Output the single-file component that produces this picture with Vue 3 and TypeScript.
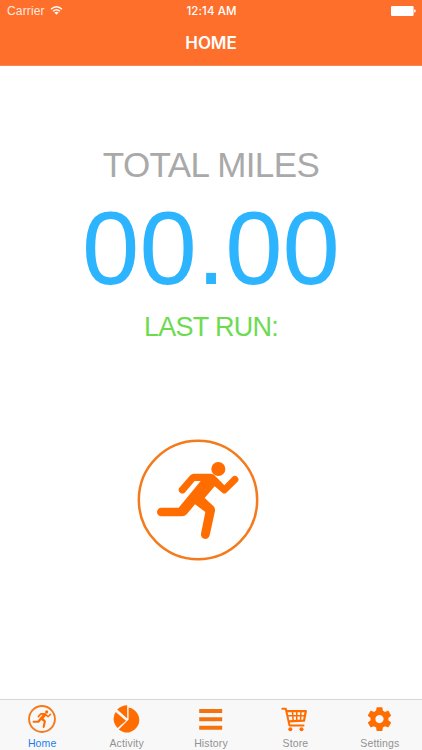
<script setup lang="ts">
import { ref } from 'vue'

type TabId = 'home' | 'activity' | 'history' | 'store' | 'settings'

interface Tab {
  id: TabId
  label: string
}

const tabs: Tab[] = [
  { id: 'home', label: 'Home' },
  { id: 'activity', label: 'Activity' },
  { id: 'history', label: 'History' },
  { id: 'store', label: 'Store' },
  { id: 'settings', label: 'Settings' },
]

const active = ref<TabId>('home')
const totalMiles = ref('00.00')
</script>

<template>
  <div class="screen">
    <header class="header">
      <div class="status">
        <div class="carrier">
          <span>Carrier</span>
          <svg class="wifi" viewBox="0 0 12 9" fill="none" stroke="#fff">
            <path d="M.6 3.1Q6-1.6 11.4 3.1" stroke-width="1.4" />
            <path d="M2.6 5.2Q6 2.3 9.4 5.2" stroke-width="1.4" />
            <path d="M6 8.7 3.9 6.6Q6 5 8.1 6.6Z" fill="#fff" stroke="none" />
          </svg>
        </div>
        <span class="time">12:14 AM</span>
        <div class="power">
          <svg class="battery" viewBox="0 0 25 10" fill="#fff">
            <rect x="0" y="0" width="22.6" height="10" rx="1.2" />
            <path d="M23.2 3.3Q24.8 3.6 24.8 5T23.2 6.7Z" />
          </svg>
        </div>
      </div>
      <h1 class="title">HOME</h1>
    </header>

    <main class="content">
      <h2 class="total-label">TOTAL MILES</h2>
      <div class="total">{{ totalMiles }}</div>
      <div class="last-run">LAST RUN:</div>
      <button class="run" aria-label="Start run">
        <svg viewBox="0 0 366 366">
          <use href="#runner" />
          <circle cx="183" cy="183" r="177.5" fill="none" stroke="#f47a1c" stroke-width="7.5" />
        </svg>
      </button>
    </main>

    <nav class="tabs">
      <button
        v-for="tab in tabs"
        :key="tab.id"
        class="tab"
        :class="{ active: tab.id === active }"
        @click="active = tab.id"
      >
        <svg v-if="tab.id === 'home'" class="icon" viewBox="0 0 366 366">
          <g id="runner" fill="#ff6c00">
            <circle cx="244" cy="90" r="21" />
            <path
              d="M170 104H222Q230 104 237 113L262 139 286 114A10.500 10.500 0 0 1 301 129L268 161Q262 166 256 161L233 142 203 177 229 201Q235 207 234 216L218 289A13 13 0 0 1 192 284L205 219 174 196 149 226Q143 232 136 232H73A13 13 0 0 1 73 206H125L191 126H173L143 161A11 11 0 0 1 126 148L160 109Q164 104 170 104Z"
            />
          </g>
          <circle cx="183" cy="183" r="169" fill="none" stroke="#f47a1c" stroke-width="25" />
        </svg>
        <svg v-else-if="tab.id === 'activity'" class="icon" viewBox="0 0 28 28" fill="#ff6c00">
          <path d="M15.6 14.4V2.600A12.500 12.500 0 1 1 5.8 24.600Z" />
          <path d="M14.200 13.5V.3Q8.2.6 4.2 4.4Z" />
          <path d="M2.7 7.1 13 15.8 4.5 23.1Q-2.4 14.8 2.700 7.1Z" />
        </svg>
        <svg v-else-if="tab.id === 'history'" class="icon" viewBox="0 0 28 28" fill="#f4730f">
          <path d="M2.2 4h23v4h-23zM2.2 12.3h23v4h-23zM2.2 20.700h23v4h-23z" />
        </svg>
        <svg v-else-if="tab.id === 'store'" class="icon" viewBox="0 0 28 28" fill="none" stroke="#ff6c00">
          <path d="M1.3 3.8H4.8L8.5 20.6H22.500" stroke-width="2" stroke-linecap="round" stroke-linejoin="round" />
          <path d="M5.700 6.2H24.8L23 15.700 7.700 16.3" stroke-width="2.2" stroke-linejoin="round" />
          <path d="M6.5 10.8H24M11.500 6.500 12.200 16M15.700 6.5V16M20 6.5 19.5 16" stroke-width="1.5" />
          <circle cx="9.300" cy="24.3" r="2" fill="#ff6c00" stroke="none" />
          <circle cx="20.5" cy="24.3" r="2" fill="#ff6c00" stroke="none" />
        </svg>
        <svg v-else class="icon" viewBox="0 0 28 28">
          <path
            transform="translate(-.8 -.2) scale(1.19)"
            fill="#ff6c00"
            d="M19.43 12.98c.04-.32.07-.64.07-.98s-.03-.66-.07-.98l2.11-1.65c.19-.15.24-.42.12-.64l-2-3.46c-.12-.22-.39-.3-.61-.22l-2.49 1c-.52-.4-1.08-.73-1.69-.98l-.38-2.65C14.46 2.18 14.25 2 14 2h-4c-.25 0-.46.18-.49.42l-.38 2.65c-.61.25-1.17.59-1.69.98l-2.49-1c-.23-.09-.49 0-.61.22l-2 3.46c-.13.22-.07.49.12.64l2.11 1.65c-.04.32-.07.65-.07.98s.03.66.07.98l-2.11 1.65c-.19.15-.24.42-.12.64l2 3.46c.12.22.39.3.61.22l2.49-1c.52.4 1.08.73 1.69.98l.38 2.65c.03.24.24.42.49.42h4c.25 0 .46-.18.49-.42l.38-2.65c.61-.25 1.17-.59 1.69-.98l2.49 1c.23.09.49 0 .61-.22l2-3.46c.12-.22.07-.49-.12-.64l-2.11-1.65zM12 15.5c-1.93 0-3.5-1.57-3.5-3.5s1.57-3.5 3.5-3.5 3.5 1.57 3.5 3.5-1.57 3.5-3.5 3.5z"
          />
        </svg>
        <span>{{ tab.label }}</span>
      </button>
    </nav>
  </div>
</template>

<style>
body {
  margin: 0;
}
</style>

<style scoped>
.screen {
  display: flex;
  flex-direction: column;
  width: 422px;
  height: 750px;
  overflow: hidden;
  background: #fff;
  font-family: "Liberation Sans", Arial, sans-serif;
}

.header {
  box-sizing: border-box;
  height: 66px;
  background: #ff6f2c;
  border-bottom: 1px solid #f88551;
  color: #fff;
}

.status {
  display: grid;
  grid-template-columns: 1fr auto 1fr;
  align-items: center;
  height: 22px;
  padding: 0 6px 0 7px;
  font-size: 12px;
  line-height: 22px;
}

.carrier {
  display: flex;
  align-items: center;
  gap: 5px;
  letter-spacing: 0.15px;
  color: #ffe9df;
}

.wifi {
  width: 13px;
  height: 9px;
  margin-top: -2px;
}

.time {
  font-family: Inter, "Liberation Sans", sans-serif;
  font-size: 11.5px;
  font-weight: 500;
  letter-spacing: 0.1px;
}

.power {
  display: flex;
  justify-content: flex-end;
}

.battery {
  width: 25px;
  height: 10px;
}

.title {
  margin: 0;
  padding-top: 9px;
  font-family: Inter, "Liberation Sans", sans-serif;
  font-size: 17px;
  font-weight: 600;
  line-height: 24px;
  letter-spacing: -0.1px;
  text-align: center;
}

.content {
  display: flex;
  flex: 1;
  flex-direction: column;
  align-items: center;
}

.total-label {
  margin: 79px 0 0;
  color: #a9a9a9;
  font-size: 35px;
  font-weight: 400;
  line-height: 40px;
  letter-spacing: -0.6px;
}

.total {
  margin-top: 14px;
  color: #2db4ff;
  font-size: 103px;
  line-height: 100px;
}

.last-run {
  margin-top: 13px;
  color: #6cdb50;
  font-size: 27px;
  line-height: 30px;
  letter-spacing: -0.7px;
}

.run {
  width: 122px;
  height: 122px;
  margin: 97px 27px 0 0;
  padding: 0;
  border: 0;
  background: none;
}

.run svg {
  display: block;
  width: 100%;
  height: 100%;
}

.tabs {
  display: flex;
  box-sizing: border-box;
  height: 51px;
  border-top: 1px solid #d6d6d6;
  background: #f8f8f8;
}

.tab {
  display: flex;
  flex: 1;
  flex-direction: column;
  align-items: center;
  padding: 5px 0 0;
  border: 0;
  background: none;
  color: #929292;
  font-family: inherit;
  font-size: 10.5px;
  line-height: 12px;
  letter-spacing: 0.15px;
}

.tab.active {
  color: #197ff0;
}

.icon {
  width: 28px;
  height: 28px;
  margin-bottom: 4px;
}
</style>
